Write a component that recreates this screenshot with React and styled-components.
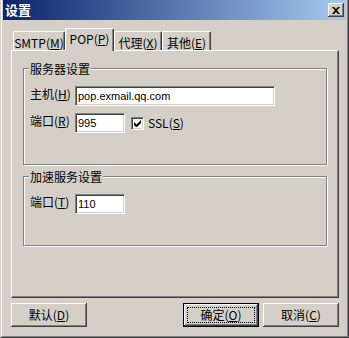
import styled, { createGlobalStyle } from "styled-components";

const GlobalStyle = createGlobalStyle`
  html, body {
    margin: 0;
    padding: 0;
    background: #d4d0c8;
  }
  body {
    font-family: "Noto Sans CJK SC", "Liberation Sans", sans-serif;
    font-size: 12px;
    color: #000;
  }
`;

const tabs = [
  { label: "SMTP", key: "M", width: 52 },
  { label: "POP", key: "P", width: 49, active: true },
  { label: "代理", key: "X", width: 48 },
  { label: "其他", key: "E", width: 49 },
];

const App = () => {
  return (
    <>
      <GlobalStyle />
      <Window>
        <Frame>
          <TitleBar>
            <Title>设置</Title>
            <CloseButton>
              <svg width="8" height="7" viewBox="0 0 8 7">
                <path d="M0 0h2l2 2 2-2h2L5 3.5 8 7H6L4 5 2 7H0l3-3.5z" fill="#000" />
              </svg>
            </CloseButton>
          </TitleBar>
          <Body>
            <TabStrip>
              {tabs.map((t) => (
                <Tab key={t.label} $active={t.active} $width={t.width}>
                  {t.label}(<u>{t.key}</u>)
                </Tab>
              ))}
            </TabStrip>
            <Panel>
              <Group>
                <Legend>服务器设置</Legend>
                <Row>
                  <Label>
                    主机(<u>H</u>)
                  </Label>
                  <TextBox $width={200} defaultValue="pop.exmail.qq.com" />
                </Row>
                <Row>
                  <Label>
                    端口(<u>R</u>)
                  </Label>
                  <TextBox $width={50} defaultValue="995" />
                  <Check>
                    <CheckBox>
                      <svg width="7" height="7" viewBox="0 0 7 7">
                        <path d="M0 2v3l2 2h1l4-4V0L2.5 4.5z" fill="#000" />
                      </svg>
                    </CheckBox>
                    <span>
                      SSL(<u>S</u>)
                    </span>
                  </Check>
                </Row>
              </Group>
              <Group>
                <Legend>加速服务设置</Legend>
                <Row>
                  <Label>
                    端口(<u>T</u>)
                  </Label>
                  <TextBox $width={50} defaultValue="110" />
                </Row>
              </Group>
            </Panel>
            <ButtonRow>
              <Button>
                默认(<u>D</u>)
              </Button>
              <Spacer />
              <Button $default>
                确定(<u>O</u>)
              </Button>
              <Button>
                取消(<u>C</u>)
              </Button>
            </ButtonRow>
          </Body>
        </Frame>
      </Window>
    </>
  );
};

export default App;

const Window = styled.div`
  box-sizing: border-box;
  width: 349px;
  height: 338px;
  background: #d4d0c8;
  border-left: 1px solid #d4d0c8;
  border-right: 1px solid #404040;
  border-bottom: 1px solid #404040;
`;

const Frame = styled.div`
  box-sizing: border-box;
  height: 100%;
  border-left: 1px solid #fff;
  border-right: 1px solid #808080;
  border-bottom: 1px solid #808080;
  padding: 0 1px 1px 1px;
  display: flex;
  flex-direction: column;
`;

const TitleBar = styled.div`
  height: 20px;
  display: flex;
  align-items: center;
  justify-content: space-between;
  padding: 0 2px 0 2px;
  background: linear-gradient(to right, #0a246a, #a6caf0);
`;

const Title = styled.span`
  color: #fff;
  font-weight: bold;
  font-size: 13px;
  line-height: 14px;
`;

const CloseButton = styled.div`
  box-sizing: border-box;
  width: 16px;
  height: 14px;
  display: flex;
  align-items: center;
  justify-content: center;
  background: #d4d0c8;
  box-shadow: inset -1px -1px #404040, inset 1px 1px #fff,
    inset -2px -2px #808080;
`;

const Body = styled.div`
  padding: 8px 7px 0 8px;
  display: flex;
  flex-direction: column;
`;

const TabStrip = styled.div`
  height: 22px;
  display: flex;
  align-items: flex-end;
  padding-left: 2px;
`;

const Tab = styled.div`
  box-sizing: border-box;
  position: relative;
  width: ${(p) => p.$width}px;
  height: ${(p) => (p.$active ? 23 : 19)}px;
  margin-bottom: ${(p) => (p.$active ? -1 : 0)}px;
  z-index: ${(p) => (p.$active ? 1 : 0)};
  background: #d4d0c8;
  border-top: 1px solid #fff;
  border-left: 1px solid #fff;
  border-right: 1px solid #404040;
  border-radius: 2px 2px 0 0;
  box-shadow: inset -1px 0 #808080;
  display: flex;
  justify-content: center;
  padding-top: ${(p) => (p.$active ? 3 : 4)}px;
  line-height: 14px;
  white-space: nowrap;
`;

const Panel = styled.div`
  box-sizing: border-box;
  width: 328px;
  height: 248px;
  border-top: 1px solid #fff;
  border-left: 1px solid #fff;
  border-right: 1px solid #404040;
  border-bottom: 1px solid #404040;
  box-shadow: inset -1px -1px #808080;
  padding: 11px 11px 0 11px;
  display: flex;
  flex-direction: column;
  gap: 5px;
`;

const Group = styled.fieldset`
  margin: 0;
  min-width: 0;
  border: 1px solid #808080;
  box-shadow: 1px 1px 0 #fff, inset 1px 1px 0 #fff;
  padding: 11px 6px 31px 6px;
  display: flex;
  flex-direction: column;
  gap: 7px;
`;

const Legend = styled.legend`
  padding: 0 1px;
  margin-left: -1px;
  line-height: 13px;
  background: #d4d0c8;
`;

const Row = styled.div`
  display: flex;
  align-items: flex-start;
`;

const Label = styled.label`
  width: 45px;
  flex: none;
  padding-top: 1px;
  line-height: 14px;
  white-space: nowrap;
`;

const TextBox = styled.input`
  box-sizing: border-box;
  width: ${(p) => p.$width}px;
  height: 20px;
  margin: 0;
  padding: 0 2px;
  border: 1px solid;
  border-color: #808080 #fff #fff #808080;
  box-shadow: inset 1px 1px #404040, inset -1px -1px #d4d0c8;
  background: #fff;
  font-family: "Liberation Sans", sans-serif;
  font-size: 11px;
  color: #000;
  outline: none;
`;

const Check = styled.div`
  display: flex;
  align-items: center;
  gap: 4px;
  height: 20px;
  margin-left: 6px;
  line-height: 14px;
`;

const CheckBox = styled.span`
  box-sizing: border-box;
  width: 13px;
  height: 13px;
  display: flex;
  align-items: center;
  justify-content: center;
  background: #fff;
  border: 1px solid;
  border-color: #808080 #fff #fff #808080;
  box-shadow: inset 1px 1px #404040, inset -1px -1px #d4d0c8;
`;

const ButtonRow = styled.div`
  display: flex;
  gap: 4px;
  margin-top: 5px;
`;

const Spacer = styled.div`
  flex: 1;
`;

const Button = styled.button`
  box-sizing: border-box;
  position: relative;
  width: 76px;
  height: 24px;
  margin: 0;
  padding: 0;
  background: #d4d0c8;
  font-family: "Noto Sans CJK SC", "Liberation Sans", sans-serif;
  font-size: 12px;
  line-height: 14px;
  color: #000;
  border: ${(p) => (p.$default ? "1px solid #000" : "none")};
  box-shadow: inset -1px -1px #404040, inset 1px 1px #fff,
    inset -2px -2px #808080;

  &::after {
    content: "";
    display: ${(p) => (p.$default ? "block" : "none")};
    position: absolute;
    inset: 3px;
    border: 1px dotted #000;
  }
`;
